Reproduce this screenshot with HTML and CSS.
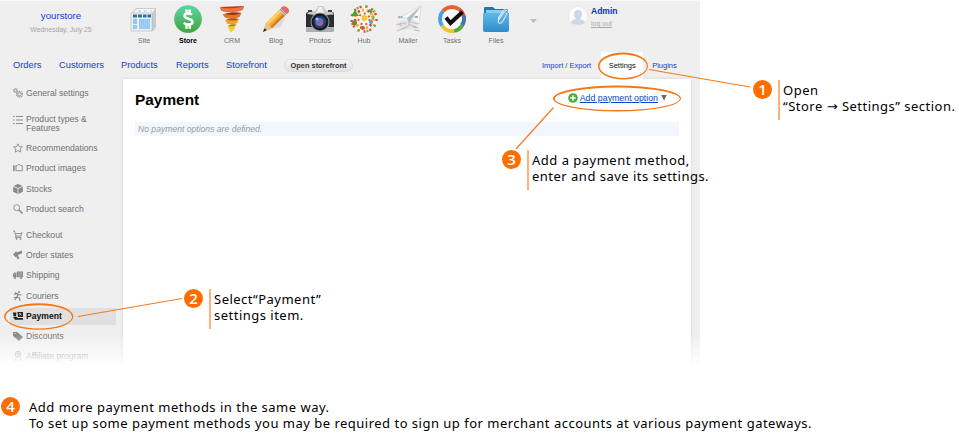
FILE: index.html
```html
<!DOCTYPE html>
<html lang="en">
<head>
<meta charset="utf-8">
<title>Payment settings</title>
<link rel="stylesheet" href="styles.css">
</head>
<body>
<main class="guide">
<div class="app">
  <header class="top">
    <div class="account"><a class="shop">yourstore</a><span class="date">Wednesday, July 25</span></div>
    <nav class="apps">
      <a class="item"><svg viewBox="0 0 28 28"><path d="M2 8l4-5h20v19l-3 4H2z" fill="#c5cace"/><path d="M3 8l4-4h18l-3 4z" fill="#fafafa"/><path d="M1 8h21v18H1z" fill="#eceff0" stroke="#aeb3b7" stroke-width=".6"/><path d="M3 9.500h4v3H3zm5 0h4v3H8zm5 0h3.500v3H13zm4.500 0H21v3h-3.500z" fill="#2b70ad"/><path d="M3 14h4v5H3zm0 6h4v4H3zm6-6h11v10H9z" fill="#94c8f2"/><path d="M10 15h9M10 17h9M10 19h9M10 21h9M10 23h9" stroke="#c9e4fb" stroke-width=".6" stroke-dasharray="1 1"/><path d="M8 6h3m3 0h3m3 0h2" stroke="#b8bbbd"/></svg><span>Site</span></a>
      <a class="item current"><svg viewBox="0 0 28 28"><defs><linearGradient id="green" x2="0" y2="1"><stop stop-color="#5bd5a4"/><stop offset="1" stop-color="#43a53d"/></linearGradient></defs><circle cx="14" cy="14.500" r="13.800" fill="#398543" opacity=".35"/><circle cx="14" cy="14" r="13.700" fill="url(#green)"/><path d="M18 9.700c-1.500-1.500-7.500-2-7.500 1.200 0 3.500 8 2.300 8 6 0 3.500-6.500 3.200-8.700 1M12.500 4.500v4M15.700 4.500v4M12.500 20v3.800M15.700 20v3.800" fill="none" stroke="#fff" stroke-width="2.500"/></svg><span>Store</span></a>
      <a class="item"><svg viewBox="0 0 28 28"><path d="M2 2l24-1-1.500 4-21 1z" fill="#c93515"/><path d="M2 2c5 1.800 18 1.800 24-1l-1.500 4C20 7.500 8 8 4 6z" fill="#ed7440"/><path d="M4.500 9l19-1-2 4C16 14 9 14 6.500 12z" fill="#e6762a"/><path d="M6.500 9C12 7 19 7 23.500 8c-5 2-11 3-17 1z" fill="#8e3b16"/><path d="M7 15l14-1-2 4c-4 2-8 1.500-10 .5z" fill="#f2a323"/><path d="M8 14.500c4-1.500 10-1.500 13-.5-4 2-8 2-13 .5z" fill="#a4581d"/><path d="M9.500 21l9-1.500-2.500 5-3 3-2-3z" fill="#efd127"/><path d="M10 21c2-2 6-2 8.500-1.500-3 2-5 2-8.500 1.500z" fill="#a48215"/></svg><span>CRM</span></a>
      <a class="item"><svg viewBox="0 0 28 28"><path d="M3 26l21-14-6 10z" fill="#b8b8b8" opacity=".35"/><path d="M4 18L18 4l6 5L10 23l-9 4z" fill="#f5ad35"/><path d="M4 18L18 4l2 2L6 20z" fill="#ffd169"/><path d="M8 22L22 8l2 2-14 13z" fill="#d47a20"/><path d="M4 18l6 5-9 4z" fill="#e9c392"/><path d="M2.300 23.500L5 25l-4 2z" fill="#252525"/><path d="M17 5l3-3 6 5-3 4z" fill="#c5cbd0"/><path d="M18 4l6 6M19 3l6 6" stroke="#777c80" stroke-width=".7"/><path d="M20 2c2-2 8 1 7 5l-2 2-6-6z" fill="#e46b5e"/></svg><span>Blog</span></a>
      <a class="item"><svg class="wide" viewBox="0 0 30 28"><path d="M1 9q0-2 3-2l7-1 1-2h7l2 2 6 1q2 0 2 2v15q0 3-3 3H3q-2 0-2-3z" fill="#2b2e31"/><path d="M2 9l2-2 7-1.500L13 1h5l3 4.500 6 1.500 2 2.500-8 .5H10z" fill="#c8cccf"/><path d="M14 2h3l2 6h-8z" fill="#eef0f1"/><path d="M3 5h4v2H3zm20 0h4v2h-4z" fill="#444"/><path d="M1 22h28v3q0 2-3 2H4q-3 0-3-2z" fill="#aeb1b3"/><circle cx="15" cy="17" r="9.500" fill="#969a9d"/><circle cx="15" cy="17" r="8.500" fill="#17191e"/><circle cx="15" cy="17" r="6.300" fill="#253c74"/><circle cx="14.500" cy="17" r="4" fill="#4b77cd"/><path d="M12 20q3-6 6-2-1 4-6 2z" fill="#c85d5e"/><circle cx="12" cy="14" r="1.500" fill="#a2c4fa"/></svg><span>Photos</span></a>
      <a class="item"><svg viewBox="0 0 28 28"><circle cx="14" cy="14" r="13" fill="#f8f5ee"/><circle cx="14" cy="14" r="12.500" fill="none" stroke="#db4b3d" stroke-width="2.500" stroke-dasharray="2 4"/><circle cx="14" cy="14" r="12.500" fill="none" stroke="#76b83e" stroke-width="2.500" stroke-dasharray="2 7" stroke-dashoffset="3"/><circle cx="14" cy="14" r="9" fill="none" stroke="#f2b425" stroke-width="3" stroke-dasharray="2 3"/><circle cx="14" cy="14" r="9" fill="none" stroke="#a54a9e" stroke-width="2.500" stroke-dasharray="2 8" stroke-dashoffset="4"/><circle cx="14" cy="14" r="5.500" fill="none" stroke="#e35b3e" stroke-width="2" stroke-dasharray="2 3"/><circle cx="14.500" cy="13" r="3" fill="#f1ca31"/><path d="M1 11l4-6 4 6zM19 4l4 2-3 3z" fill="#48a52b"/><circle cx="4.500" cy="18" r="2.500" fill="#98772b"/><circle cx="21" cy="17" r="2" fill="#579bd2"/><circle cx="13" cy="23" r="2" fill="#e74f3a"/><circle cx="23" cy="12" r="1.700" fill="#82b942"/></svg><span>Hub</span></a>
      <a class="item"><svg viewBox="0 0 28 28"><path d="M1 19l9-4 5 1 10-2-3 5 5 8-9-3-7 1-10 1 6-5z" fill="#e4e5e6"/><path d="M5 13L27 1l-2 18-7-5-3 4-2-5z" fill="#f7f8f8" stroke="#cbcfd2" stroke-width=".6"/><path d="M27 1L15 18l-2-5z" fill="#b6bcc1"/><path d="M4 12h5m13 0h4" stroke="#d74b53" stroke-width="1.200" stroke-dasharray="2 3"/><path d="M6.500 12h4m10 0h4" stroke="#4675b8" stroke-width="1.200" stroke-dasharray="2 3"/><path d="M2 20l6-2 4 1M8 24l9-4 7 3M16 17l8 2M3 26l8-3M20 25l5 1" fill="none" stroke="#b3b8bd" stroke-width=".8"/><path d="M5 20h3m6-1h2m3 3h3" stroke="#ce8384" stroke-width=".7"/></svg><span>Mailer</span></a>
      <a class="item"><svg viewBox="0 0 28 28"><circle cx="14" cy="14" r="11" fill="#f9faf9"/><g fill="none" stroke-width="3.800"><path d="M5 6A12 12 0 0 1 21 4.300" stroke="#e8632c"/><path d="M21 4.300A12 12 0 0 1 26 13" stroke="#d94e2a"/><path d="M26 13A12 12 0 0 1 16 26" stroke="#56a83e"/><path d="M16 26A12 12 0 0 1 4 20.500" stroke="#efc52d"/><path d="M4 20.500A12 12 0 0 1 5 6" stroke="#4b9fe1"/><path d="M26 11a12 12 0 0 1-2 9" stroke="#3e78b9"/></g><path d="M8 12.500l4.500 5.500L24.500 7" fill="none" stroke="#111" stroke-width="4"/></svg><span>Tasks</span></a>
      <a class="item"><svg viewBox="0 0 28 28"><defs><linearGradient id="blue" x2="0" y2="1"><stop stop-color="#62b9e8"/><stop offset="1" stop-color="#2e8bcb"/></linearGradient></defs><path d="M2 3q0-1 1-1h8l2 2h11q2 0 2 2v19H2z" fill="#2476ad"/><path d="M4 5h20v7H4z" fill="#8dc9ea"/><path d="M1 8h26v17q0 2-2 2H3q-2 0-2-2z" fill="url(#blue)"/><path d="M16 14l4-7q3-4 5-1 1 1-4 10-2 3-4 2-2-2 1-5l4-6" fill="none" stroke="#e4edf2" stroke-width="1.100"/></svg><span>Files</span></a>
    </nav>
    <span class="more"></span>
    <div class="user"><svg viewBox="0 0 20 20"><circle cx="10" cy="10" r="9.500" fill="#fafcff" stroke="#dce1e7" stroke-width=".6"/><path d="M3 17q0-3 5-4-2-2-2-5 0-4 4-4t4 4q0 3-2 5 5 1 5 4-6 4-14 0z" fill="#ced8e4"/></svg><div class="who"><b>Admin</b><a>log out</a></div></div>
  </header>
  <div class="tabs">
    <nav class="store-tabs"><a>Orders</a><a>Customers</a><a>Products</a><a>Reports</a><a>Storefront</a><button>Open storefront</button></nav>
    <nav class="side-tabs"><a>Import / Export</a><a class="active">Settings</a><a>Plugins</a></nav>
  </div>
  <div class="body">
    <aside class="menu">
      <a><svg viewBox="0 0 10 10"><circle cx="2.500" cy="2.500" r="1.300"/><circle cx="6.500" cy="6.300" r="1.700"/><circle cx="2.500" cy="2.500" r="2.100" stroke-dasharray=".8 .8"/><circle cx="6.500" cy="6.300" r="2.900" stroke-width="1.200" stroke-dasharray="1 .8"/></svg>General settings</a>
      <a class="double"><svg viewBox="0 0 10 10"><path d="M3 1.500h7M3 5h7M3 8.500h7M0 1.500h1.500M0 5h1.500M0 8.500h1.500" stroke-width="1.200"/></svg><span>Product types &amp;<br>Features</span></a>
      <a><svg viewBox="0 0 10 10"><path d="M5 .8l1.300 2.800 3.100.3L7.100 6l.7 3.100L5 7.500 2.200 9.100 2.900 6 .6 3.900l3.100-.3z"/></svg>Recommendations</a>
      <a><svg viewBox="0 0 10 10"><path d="M3 2.700h1.300l.7-1h2l.8 1h1.500v5H3zM.5 2.200v6M1.700 2.200v6"/></svg>Product images</a>
      <a><svg viewBox="0 0 10 10"><path class="solid" d="M5 0l4.600 2L5 4 .5 2zM.2 2.700l4.400 2V10L.2 7.800zm9.600 0l-4.400 2V10l4.400-2.200z"/></svg>Stocks</a>
      <a><svg viewBox="0 0 10 10"><circle cx="3.700" cy="3.700" r="3"/><path d="M6 6l3.500 3.500" stroke-width="1.600"/></svg>Product search</a>
      <a class="start"><svg viewBox="0 0 10 10"><path d="M0 1h1.500l1.500 5h5l1-4M2.500 3.500h6M3 6l-.7 1.500H8.500"/><circle cx="3.500" cy="9" r=".6"/><circle cx="7.500" cy="9" r=".6"/></svg>Checkout</a>
      <a><svg viewBox="0 0 10 10"><path class="solid" d="M0 4.500L3.500 1v1.500L9 .5v2.800L5 5l1.500 4H4.500L3.300 6v2z"/></svg>Order states</a>
      <a><svg viewBox="0 0 10 10"><path class="solid" d="M4 1.500h6v5.700H4zM0 4l1.500-1.500h2v4.700H0z"/><circle class="solid" cx="2" cy="8" r="1"/><circle class="solid" cx="8" cy="8" r="1"/><path d="M1 4h1.500M6 2v5M8 2v5" stroke="#ccc" stroke-width=".6"/></svg>Shipping</a>
      <a><svg viewBox="0 0 10 10"><circle class="solid" cx="6" cy="1" r="1"/><path d="M1 3.500l3-1 1.500 1L8.500 4M5 3L4 6 .5 7M4 6l2.500 1L7 10M2 1.500l2 1.500M4 6L2 9" stroke-width="1.200"/></svg>Couriers</a>
      <a class="selected"><svg viewBox="0 0 10 10"><path class="solid" d="M0 1.500h3.500L3 5H.5zM4.500 1H10v5H5zM0 6l3-.5L5 7h5v1.700H2z"/><path d="M6 2.500h1l1.500 2M8 2L6.500 4.500" stroke="#eee" stroke-width=".7"/></svg>Payment</a>
      <a><svg viewBox="0 0 10 10"><path class="solid" fill-rule="evenodd" d="M0 1h4l6 5-4 4-6-5zM1.500 2v1h1V2z"/></svg>Discounts</a>
      <a><svg viewBox="0 0 10 10"><circle cx="5" cy="3.300" r="2.800"/><circle cx="5" cy="3.300" r="1"/><path d="M3.500 5.800L2 9.500l1.500-.7M6.500 5.800L8 9.500l-1.500-.7"/></svg>Affiliate program</a>
    </aside>
    <section class="content">
      <div class="heading"><h1>Payment</h1><a class="add"><svg viewBox="0 0 10 10"><circle cx="5" cy="5" r="4.800"/><path d="M5 2.200v5.600M2.200 5h5.600"/></svg><u>Add payment option</u><i></i></a></div>
      <p class="empty">No payment options are defined.</p>
    </section>
  </div>
</div>
<svg class="marks" viewBox="0 0 959 440">
  <g fill="#f57614" fill-rule="evenodd">
    <path d="M598 66a25 13.500 0 1 1 50 0a25 13.500 0 1 1-50 0zM599.500 66.300a23.700 11.700 0 1 0 47.400 0a23.700 11.700 0 1 0-47.400 0z"/>
    <path d="M553 98.500a64 13 0 1 1 128 0a64 13 0 1 1-128 0zM554.800 98.800a62.500 11.200 0 1 0 125 0a62.500 11.200 0 1 0-125 0z"/>
    <path d="M4 316.500a34.700 13.300 0 1 1 69.400 0a34.700 13.300 0 1 1-69.400 0zM5.500 316.800a33.300 11.600 0 1 0 66.600 0a33.300 11.600 0 1 0-66.600 0z"/>
  </g>
  <path d="M649 69.500l101 17.500M553.500 107.500L516 149M78 316.500l104-18" fill="none" stroke="#f47b20" stroke-width="1.200"/>
</svg>
<div class="note one"><b>1</b><p><span>Open</span><span>“Store <i>→</i> Settings” section.</span></p></div>
<div class="note two"><b>2</b><p><span>Select“Payment”</span><span>settings item.</span></p></div>
<div class="note three"><b>3</b><p><span>Add a payment method,</span><span>enter and save its settings.</span></p></div>
<div class="note four"><b>4</b><p><span>Add more payment methods in the same way.</span><span>To set up some payment methods you may be required to sign up for merchant accounts at various payment gateways.</span></p></div>
</main>
</body>
</html>
```
FILE: styles.css
```css
* { box-sizing: border-box; }
body { margin: 0; background: #fff; font-family: "Liberation Sans", sans-serif; }
.guide { position: relative; width: 959px; height: 440px; overflow: hidden; }
.app { position: relative; width: 700px; height: 370px; overflow: hidden; background: #efefef; border-top: 1px solid #f8f8f8; color: #707070; }
.app::after { content: ""; position: absolute; inset: auto 0 0; height: 36px; background: linear-gradient(rgba(255,255,255,0), #fff 90%); }
.top { display: flex; height: 49px; }
.account { width: 122px; padding-top: 8px; text-align: center; display: flex; flex-direction: column; }
.shop { font-size: 9.700px; line-height: 13px; color: #1140c8; }
.date { margin-top: 2px; font-size: 6.900px; line-height: 11px; color: #a4a4a4; }
.apps { display: flex; }
.item { width: 44px; display: flex; flex-direction: column; align-items: center; padding-top: 4px; font-size: 7px; line-height: 9px; }
.item svg { width: 28px; height: 28px; margin-bottom: 3px; }
.item .wide { width: 30px; }
.current { color: #000; font-weight: bold; }
.more { margin: 18px 0 0 12px; width: 7px; height: 4px; background: #bbb; clip-path: polygon(0 0, 100% 0, 50% 100%); }
.user { display: flex; margin: 5px 0 0 31px; }
.user svg { width: 20px; height: 20px; }
.who { display: flex; flex-direction: column; margin-left: 3px; font-size: 8.500px; line-height: 11px; color: #0830c5; }
.who a { font-size: 7px; line-height: 13px; color: #aaa; text-decoration: underline; }
.tabs { display: flex; height: 29px; justify-content: space-between; color: #1140c8; }
.store-tabs { display: grid; grid-template-columns: 46px 62px 55px 50px 58px 69px; padding-left: 13px; font-size: 9.300px; line-height: 31px; white-space: nowrap; }
.store-tabs button { align-self: start; margin-top: 9px; height: 13px; padding: 0; border: 1px solid #ddd; border-radius: 7px; background: linear-gradient(#f6f6f6, #e1e1e1); color: #333; font: bold 7.400px/11px "Liberation Sans", sans-serif; white-space: nowrap; }
.side-tabs { display: flex; width: 158px; font-size: 7.500px; line-height: 31px; white-space: nowrap; }
.side-tabs .active { width: 42px; margin: 2px 9px 0 10px; background: #fff; color: #111; text-align: center; line-height: 28px; }
.body { display: flex; height: 291px; }
.menu { width: 122px; padding-top: 4px; font-size: 8.600px; }
.menu a { display: flex; align-items: center; height: 20.200px; padding-left: 3px; margin: 0 6px 0 10px; white-space: nowrap; }
.menu svg { width: 10px; height: 10px; margin-right: 3px; fill: none; stroke: #898989; stroke-width: .9; overflow: visible; }
.menu .solid { fill: #898989; stroke: none; }
.menu .double { height: 18px; margin-top: 12px; margin-bottom: 5px; line-height: 9px; align-items: flex-start; }
.menu .start { margin-top: 6px; }
.menu .selected { height: 17px; margin-top: 2px; margin-bottom: 1px; background: #e0e0e0; color: #111; font-weight: bold; }
.menu .selected .solid { fill: #222; }
.content { width: 568px; margin-left: 1px; padding: 10px 12px; background: #fff; box-shadow: 0 0 3px rgba(0,0,0,.12); }
.heading { display: flex; justify-content: space-between; height: 33px; }
h1 { margin: 0; font-size: 15.400px; line-height: 21px; color: #000; }
.add { display: flex; align-items: center; height: 17px; margin-right: 12px; font-size: 8.800px; color: #1140c8; }
.add svg { width: 10px; height: 10px; margin-right: 2px; fill: #49ad36; stroke: #fff; stroke-width: 1.400; }
.add circle { stroke: none; }
.add i { width: 6px; height: 6px; margin-left: 3px; background: #666; clip-path: polygon(0 0, 100% 0, 50% 100%); }
.add u { text-underline-offset: 1px; text-decoration-thickness: 1px; }
.empty { margin: 0; height: 14px; padding-left: 3px; background: #f2f7ff; font-size: 8.600px; line-height: 14px; font-style: italic; color: #999; }
.marks { position: absolute; inset: 0; width: 959px; height: 440px; }
.note { position: absolute; display: flex; color: #000; font: 13px/16px "Noto Sans", sans-serif; letter-spacing: .49px; white-space: nowrap; }
.note b { flex: none; width: 19px; height: 19px; border-radius: 50%; background: #ff6c00; color: #fff; font: 600 15px/19px "Open Sans", sans-serif; letter-spacing: 0; text-align: center; }
.note p { height: 40px; margin: 0 0 0 6px; padding: 2px 0 0 3px; border-left: 2px solid #ffb17c; }
.note span { display: block; height: 16px; }
.note i { font: 13px/14px "DejaVu Sans", sans-serif; }
.one { left: 753px; top: 80px; }
.two { left: 184px; top: 289px; }
.three { left: 502px; top: 150px; }
.four { left: 1px; top: 397px; }
.four p { border: 0; padding-left: 3px; }
```
